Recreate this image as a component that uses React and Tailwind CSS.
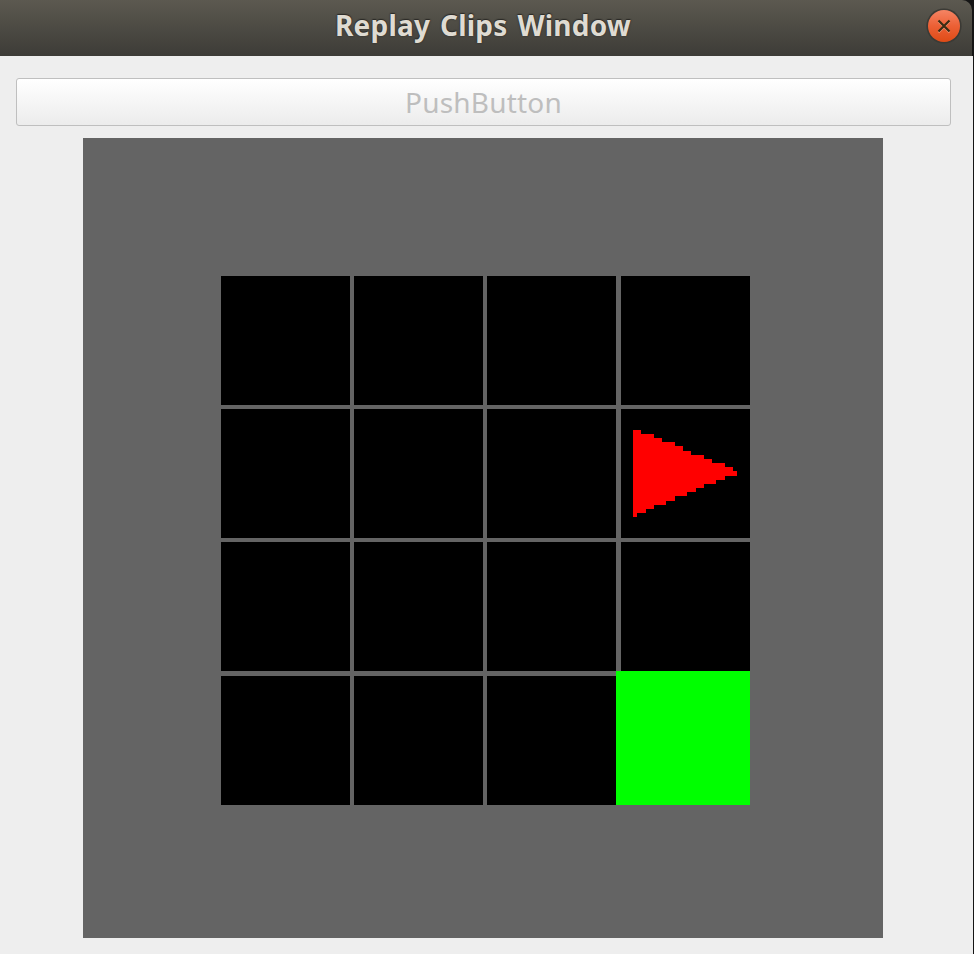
const cells = Array.from({ length: 16 }, (_, i) => i);
const GOAL = 15;
const AGENT = 7;

function Agent() {
  return (
    <svg width="129" height="129" viewBox="621 409 129 129" shapeRendering="crispEdges" className="block">
      <path
        fill="#ff0000"
        d="M633 430H641V434H654V438H662V442H675V446H683V451H691V455H704V459H712V463H725V467H733V471H737V476H725V480H716V484H704V488H696V492H687V496H675V501H666V505H654V509H646V513H637V517H633Z"
      />
    </svg>
  );
}

function CloseIcon() {
  return (
    <svg width="36" height="36" viewBox="0 0 36 36" className="block">
      <defs>
        <linearGradient id="close" x1="0" y1="0" x2="0" y2="1">
          <stop offset="0" stopColor="#f58464" />
          <stop offset="0.5" stopColor="#ec6035" />
          <stop offset="1" stopColor="#df4b16" />
        </linearGradient>
      </defs>
      <circle cx="18" cy="18" r="17.6" fill="#3b3a35" />
      <circle cx="18" cy="18" r="16" fill="url(#close)" />
      <path d="M12.5 13.5L23.5 24.5M23.5 13.5L12.5 24.5" stroke="#f59372" strokeWidth="2" />
      <path d="M12.5 12.5L23.5 23.5M23.5 12.5L12.5 23.5" stroke="#3a2c14" strokeWidth="2.2" />
    </svg>
  );
}

export default function App() {
  return (
    <div className="h-[954px] w-[974px] overflow-hidden bg-[#151515] font-['Noto_Sans',sans-serif]">
      <header className="flex h-14 w-[972px] items-start rounded-tr-[10px] bg-linear-to-b from-[#5c5950] to-[#3d3c37]">
        <div className="w-[40px]" />
        <h1 className="flex-1 whitespace-nowrap text-center text-[28px] leading-[50px] font-bold tracking-[0.2px] text-[#dfdbd2] [text-shadow:0_0_2px_#2b2a27,0_-1px_1px_#2b2a27] [word-spacing:2.5px]">
          Replay Clips Window
        </h1>
        <button className="mr-[10px] mt-2 h-9 w-9" aria-label="Close">
          <CloseIcon />
        </button>
      </header>
      <main className="flex h-[898px] w-[973px] flex-col bg-[#eeeeee] pt-[22px]">
        <button
          disabled
          className="ml-4 h-12 w-[935px] rounded-[3px] border border-[#bfbfbf] bg-linear-to-b from-white to-[#ececec] text-center text-[28px] leading-[46px] tracking-[0.2px] text-[#bebebe]"
        >
          PushButton
        </button>
        <div className="ml-[83px] mt-3 h-[800px] w-[800px] bg-[#646464] pl-[138px] pt-[138px]">
          <div className="grid grid-cols-[133px_133px_134px_129px] grid-rows-[133px_133px_134px_129px]">
            {cells.map((i) =>
              i === GOAL ? (
                <div key={i} className="-ml-[5px] -mt-[5px] h-[134px] w-[134px] bg-[#00ff00]" />
              ) : (
                <div key={i} className="h-[129px] w-[129px] bg-black">
                  {i === AGENT && <Agent />}
                </div>
              )
            )}
          </div>
        </div>
      </main>
    </div>
  );
}
